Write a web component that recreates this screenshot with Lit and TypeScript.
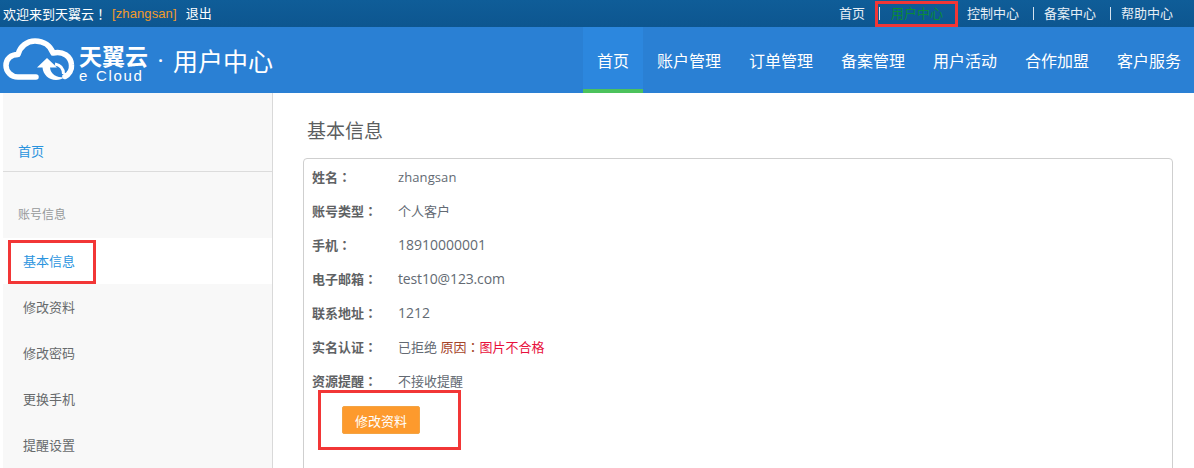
import { LitElement, html, css, svg } from "lit";
import { customElement } from "lit/decorators.js";

const cloud = svg`<svg class="cloud" width="72" height="44" viewBox="0 0 72 44">
  <path fill="none" stroke="#fff" stroke-width="5.500" stroke-linecap="round" stroke-linejoin="round" d="M33 39H15C8 39 3 33.500 3 27.500C3 21 8 16.500 15 16.500C17 8.500 24 3 32 3C41 3 47.500 8 50 15C60 12.500 68 18.500 68.500 27C69 32 66 36.500 62 38.500"/>
  <path fill="#fff" d="M44 20L34 29.500H39.500C40 36.500 46 42 53 42C56.500 42 59 41 61 39.500C54 39.500 47.500 36.500 47 29.500H54Z"/>
  <path fill="none" stroke="#fff" stroke-width="3" d="M52 26C57 27 60.500 30.500 60.500 36"/>
</svg>`;

@customElement("app-root")
export class AppRoot extends LitElement {
  static styles = css`
    :host { display: block; width: 1194px; height: 468px; overflow: hidden; position: relative;
      font-family: "Open Sans", "Liberation Sans", "Noto Sans CJK SC", sans-serif; font-size: 13px; color: #676a6c; background: #fff; }
    .p { font-family: "Noto Sans CJK JP", sans-serif; }
    .top { height: 27px; background: linear-gradient(#0f5d98, #0d5690); color: #fff; display: flex; justify-content: space-between; align-items: center; font-size: 13px; line-height: 27px; }
    .welcome { display: flex; padding-left: 3px; }
    .user { color: #f39a2b; margin-left: 5px; letter-spacing: 0.100px; font-family: "Liberation Sans", sans-serif; }
    .logout { margin-left: 9px; }
    .toplinks { display: flex; align-items: center; padding-right: 21px; color: #e6eef5; }
    .toplinks span { line-height: 13px; white-space: nowrap; padding: 0 14px 0 10px; border-left: 1px solid #d5e2ee; }
    .toplinks span.first { border-left: 0; padding-left: 0; }
    .toplinks span.on { color: #0b8a3a; padding-left: 11px; padding-right: 24px; }
    .toplinks span.sp { padding-left: 0; border-left: 0; }
    .toplinks span.last { padding-right: 0; }
    .head { height: 66px; background: #2a80d4; display: flex; justify-content: space-between; color: #fff; }
    .logo { display: flex; align-items: center; padding-left: 3px; }
    .brand { display: flex; flex-direction: column; gap: 3px; margin-left: 4px; width: 69px; padding-top: 7px; }
    .brand b { font-weight: 700; font-size: 23px; line-height: 20px; white-space: nowrap; }
    .brand i { font-style: normal; font-size: 15px; line-height: 13px; letter-spacing: 1.700px; word-spacing: 1px; font-family: "Liberation Sans", sans-serif; white-space: nowrap; }
    .dot { width: 25px; text-align: center; font-size: 16px; font-weight: 700; }
    .title { font-size: 25px; }
    nav { display: flex; }
    nav a { padding: 0 14px; font-size: 16px; line-height: 68px; box-sizing: border-box; height: 66px; white-space: nowrap; }
    nav a:last-child { padding-right: 13px; }
    nav a.on { background: #2c87de; border-bottom: 4px solid #4cc25c; }
    .main { display: flex; height: 375px; }
    aside { width: 273px; box-sizing: border-box; padding-left: 3px; background: linear-gradient(to right, #fff 3px, #f8f8f8 3px); border-right: 1px solid #d9d9d9; flex: none; }
    .home { height: 79px; box-sizing: border-box; padding: 49px 0 0 15px; color: #2a94de; line-height: 18px; border-bottom: 1px solid #dcdcdc; }
    .group { padding-left: 15px; margin-top: 34px; line-height: 18px; color: #96989a; font-size: 12px; height: 32px; }
    .item { height: 46px; line-height: 46px; padding-left: 20px; font-size: 13px; color: #676a6c; }
    .item.on { background: #fff; color: #2a94de; }
    .content { flex: 1; padding: 24px 21px 0 30px; min-width: 0; }
    h1 { font-weight: 400; font-size: 19px; line-height: 28px; margin: 0 0 13px 4px; color: #5b5e60; }
    .panel { border: 1px solid #cfcfcf; border-radius: 4px; height: 400px; padding: 1px 8px 0; box-sizing: border-box; }
    .row { display: flex; height: 34px; line-height: 34px; }
    .row b { width: 86px; font-weight: 700; color: #5f6264; flex: none; font-size: 13px; }
    .row span.v { white-space: nowrap; color: #636a73; }
    .row span.num { font-size: 14px; }
    .row span.mail { font-size: 14px; letter-spacing: -0.150px; }
    .row span.name { letter-spacing: 0.100px; }
    .row em { font-style: normal; color: #e8103c; }
    .row em u { text-decoration: none; color: #a5442a; }
    button { display: block; margin: 8px 0 0 30px; width: 78px; height: 28px; border: 1px solid #f3a444; border-radius: 2px; background: #fd9a2d; color: #fff; font: inherit; font-size: 13px; padding: 0; }
    .mark { position: absolute; border: 3px solid #f23636; box-sizing: border-box; pointer-events: none; }
    .m1 { left: 875px; top: 1px; width: 83px; height: 26px; }
    .m2 { left: 8px; top: 240px; width: 88px; height: 44px; }
    .m3 { left: 318px; top: 390px; width: 143px; height: 60px; }
  `;

  render() {
    const colon = html`<span class="p">：</span>`;
    const rows: [string, unknown, string][] = [
      ["姓名", "zhangsan", "name"],
      ["账号类型", "个人客户", ""],
      ["手机", "18910000001", "num"],
      ["电子邮箱", "test10@123.com", "mail"],
      ["联系地址", "1212", "num"],
      ["实名认证", html`已拒绝 <em><u>原因<span class="p">：</span></u>图片不合格</em>`, ""],
      ["资源提醒", "不接收提醒", ""],
    ];
    return html`
      <div class="top">
        <div class="welcome"><span>欢迎来到天翼云<span class="p">！</span></span><span class="user">[zhangsan]</span><span class="logout">退出</span></div>
        <div class="toplinks">
          <span class="first">首页</span><span class="on">用户中心</span><span class="sp">控制中心</span><span>备案中心</span><span class="last">帮助中心</span>
        </div>
      </div>
      <div class="head">
        <div class="logo">${cloud}
          <div class="brand"><b>天翼云</b><i>e Cloud</i></div>
          <span class="dot">·</span><span class="title">用户中心</span>
        </div>
        <nav>
          <a class="on">首页</a><a>账户管理</a><a>订单管理</a><a>备案管理</a><a>用户活动</a><a>合作加盟</a><a>客户服务</a>
        </nav>
      </div>
      <div class="main">
        <aside>
          <div class="home">首页</div>
          <div class="group">账号信息</div>
          <div class="item on">基本信息</div>
          <div class="item">修改资料</div>
          <div class="item">修改密码</div>
          <div class="item">更换手机</div>
          <div class="item">提醒设置</div>
        </aside>
        <div class="content">
          <h1>基本信息</h1>
          <div class="panel">
            ${rows.map(([k, v, c]) => html`<div class="row"><b>${k}${colon}</b><span class="v ${c}">${v}</span></div>`)}
            <button>修改资料</button>
          </div>
        </div>
      </div>
      <div class="mark m1"></div><div class="mark m2"></div><div class="mark m3"></div>
    `;
  }
}
